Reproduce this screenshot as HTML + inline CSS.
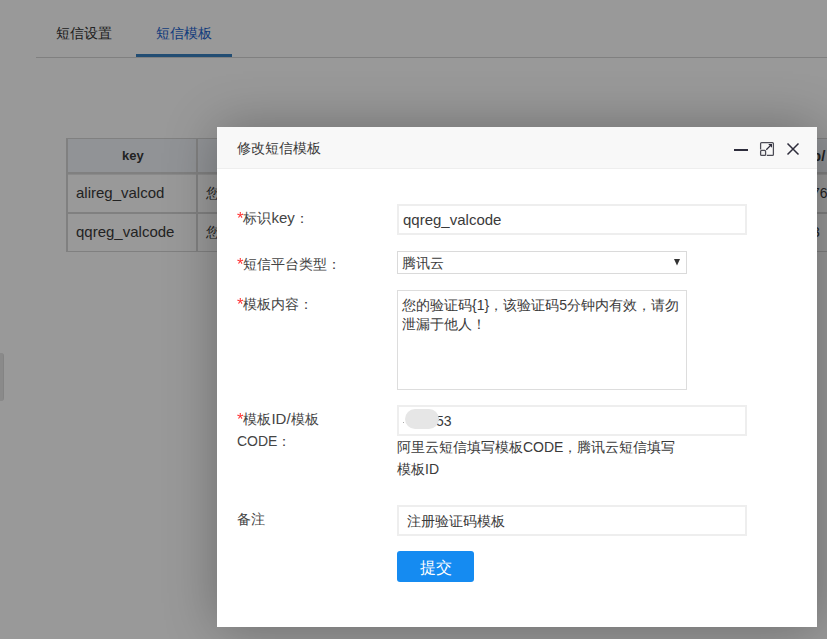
<!DOCTYPE html>
<html><head><meta charset="utf-8">
<style>
*{margin:0;padding:0;box-sizing:border-box;}
html,body{width:827px;height:639px;overflow:hidden;background:#fff;}
body{position:relative;font-family:"Liberation Sans",sans-serif;font-size:14px;color:#333;}
.abs{position:absolute;white-space:nowrap;}
/* page */
.tabline{position:absolute;left:36px;top:57px;width:800px;height:1px;background:#d6d6d6;}
.tab{position:absolute;top:19px;line-height:28px;font-size:14px;color:#333;}
.tabul{position:absolute;left:136px;top:54px;width:96px;height:3px;background:#3A80C0;}
table.t{position:absolute;left:66px;top:138px;border-collapse:collapse;}
.tb{position:absolute;background:#d6d6d6;}
/* overlay */
.shade{position:absolute;left:0;top:0;width:827px;height:639px;background:#000;opacity:.4;}
/* dialog */
.dlg{position:absolute;left:217px;top:127px;width:600px;height:500px;background:#fff;box-shadow:1px 1px 50px rgba(0,0,0,.3);}
.ttl{position:absolute;left:0;top:0;width:600px;height:42px;background:#f8f8f8;border-bottom:1px solid #eee;}
.lbl{position:absolute;left:20px;font-size:14px;color:#444;line-height:22px;white-space:nowrap;}
.req{color:#f33;display:inline-block;transform:scale(1.2,1.15);transform-origin:0 40%;margin-right:1px;}
.inp{position:absolute;left:180px;width:350px;height:31px;border:2px solid #eee;background:#fff;}
.sel{position:absolute;left:180px;width:290px;height:23px;border:1px solid #dadada;background:#fff;}
.ta{position:absolute;left:180px;width:290px;height:100px;border:1px solid #ddd;background:#fff;}
.txt{position:absolute;white-space:nowrap;font-size:14px;color:#3a3a3a;}
</style></head><body>

<!-- page tabs -->
<div class="tab" style="left:56px;">短信设置</div>
<div class="tab" style="left:156px;color:#1c64d0;">短信模板</div>
<div class="tabline"></div>
<div class="tabul"></div>

<!-- table -->
<div class="tb" style="left:66px;top:139px;width:770px;height:33px;background:#f2f6fa;"></div>
<div class="tb" style="left:66px;top:138px;width:770px;height:1px;"></div>
<div class="tb" style="left:66px;top:172px;width:770px;height:2px;"></div>
<div class="tb" style="left:66px;top:174px;width:770px;height:1px;background:#e6e6e6;"></div>
<div class="tb" style="left:66px;top:212px;width:770px;height:2px;"></div>
<div class="tb" style="left:66px;top:251px;width:770px;height:1px;"></div>
<div class="tb" style="left:66px;top:138px;width:2px;height:114px;"></div>
<div class="tb" style="left:196px;top:138px;width:2px;height:114px;"></div>
<div class="txt" style="left:122px;top:146px;font-weight:bold;line-height:20px;font-size:13px;">key</div>
<div class="txt" style="left:76px;top:183px;line-height:20px;font-size:15px;">alireg_valcod</div>
<div class="txt" style="left:76px;top:222px;line-height:20px;font-size:15px;">qqreg_valcode</div>
<div class="txt" style="left:206px;top:183px;line-height:20px;">您</div>
<div class="txt" style="left:206px;top:222px;line-height:20px;">您</div>
<div class="txt" style="left:812px;top:146px;font-weight:bold;line-height:20px;font-size:15px;">p/</div>
<div class="txt" style="left:812px;top:183px;line-height:20px;">76</div>
<div class="txt" style="left:812px;top:222px;line-height:20px;">3</div>

<div class="abs" style="left:-2px;top:353px;width:6px;height:48px;background:#e6e6e6;border-radius:3px;border-right:1px solid #ddd;"></div>

<div class="shade"></div>

<div class="dlg">
  <div class="ttl">
    <div class="txt" style="left:20px;top:11px;line-height:20px;">修改短信模板</div>
  <svg class="abs" style="left:0;top:0;" width="600" height="42" viewBox="217 127 600 42">
    <rect x="734" y="149" width="14" height="2" fill="#2E2D3C"/>
    <path d="M760.6,149.6 V143.6 Q760.6,142.6 761.6,142.6 H772.4 Q773.4,142.6 773.4,143.6 V154.4 Q773.4,155.4 772.4,155.4 H766.8" fill="none" stroke="#4b4b55" stroke-width="1.25"/>
    <rect x="760.6" y="150.4" width="5" height="5" rx="1" fill="#f0f0f0" stroke="#4b4b55" stroke-width="1.25"/>
    <path d="M766.3,149.7 L770.6,145.4" stroke="#2E2D3C" stroke-width="1.3"/>
    <path d="M768.2,144 H772 V147.8 Z" fill="#2E2D3C"/>
    <path d="M787.5,143.5 L798.5,154.5 M798.5,143.5 L787.5,154.5" stroke="#2E2D3C" stroke-width="1.5"/>
  </svg>
  </div>
  <!-- row1 -->
  <div class="lbl" style="top:80px;"><span class="req">*</span>标识<span style="font-size:15px">key</span>：</div>
  <div class="inp" style="top:77px;"></div>
  <div class="txt" style="left:186px;top:83px;line-height:20px;font-size:15px;">qqreg_valcode</div>
  <!-- row2 -->
  <div class="lbl" style="top:126px;"><span class="req">*</span>短信平台类型：</div>
  <div class="sel" style="top:124px;"></div>
  <div class="txt" style="left:185px;top:126px;line-height:20px;">腾讯云</div>
  <svg class="abs" style="left:456px;top:131px;" width="8" height="8" viewBox="0 0 8 8"><path d="M1,1 H7 L4,7.5 Z" fill="#333"/></svg>
  <!-- row3 -->
  <div class="lbl" style="top:166px;"><span class="req">*</span>模板内容：</div>
  <div class="ta" style="top:163px;"></div>
  <div class="txt" style="left:185px;top:169px;line-height:19px;">您的验证码{1}，该验证码5分钟内有效，请勿<br>泄漏于他人！</div>
  <!-- row4 -->
  <div class="lbl" style="top:281px;"><span class="req">*</span>模板<span style="font-size:15px">ID/</span>模板<br>CODE：</div>
  <div class="inp" style="top:278px;"></div>
  <div class="txt" style="left:219px;top:284px;line-height:20px;">53</div>
  <div class="abs" style="left:187.5px;top:281.5px;width:34px;height:20px;border-radius:10px;background:#e6e6e6;filter:blur(0.5px);"></div>
  <div class="abs" style="left:186px;top:295px;width:1px;height:1px;background:#aaa;"></div>
  <div class="txt" style="left:180px;top:309px;line-height:22px;">阿里云短信填写模板CODE，腾讯云短信填写<br>模板ID</div>
  <!-- row5 -->
  <div class="lbl" style="top:381px;">备注</div>
  <div class="inp" style="top:378px;"></div>
  <div class="txt" style="left:190px;top:384px;line-height:20px;">注册验证码模板</div>
  <!-- button -->
  <div class="abs" style="left:180px;top:424px;width:77px;height:31px;background:#158BF1;border-radius:3px;color:#fff;font-size:16px;text-align:center;line-height:33px;">提交</div>
</div>
</body></html>
